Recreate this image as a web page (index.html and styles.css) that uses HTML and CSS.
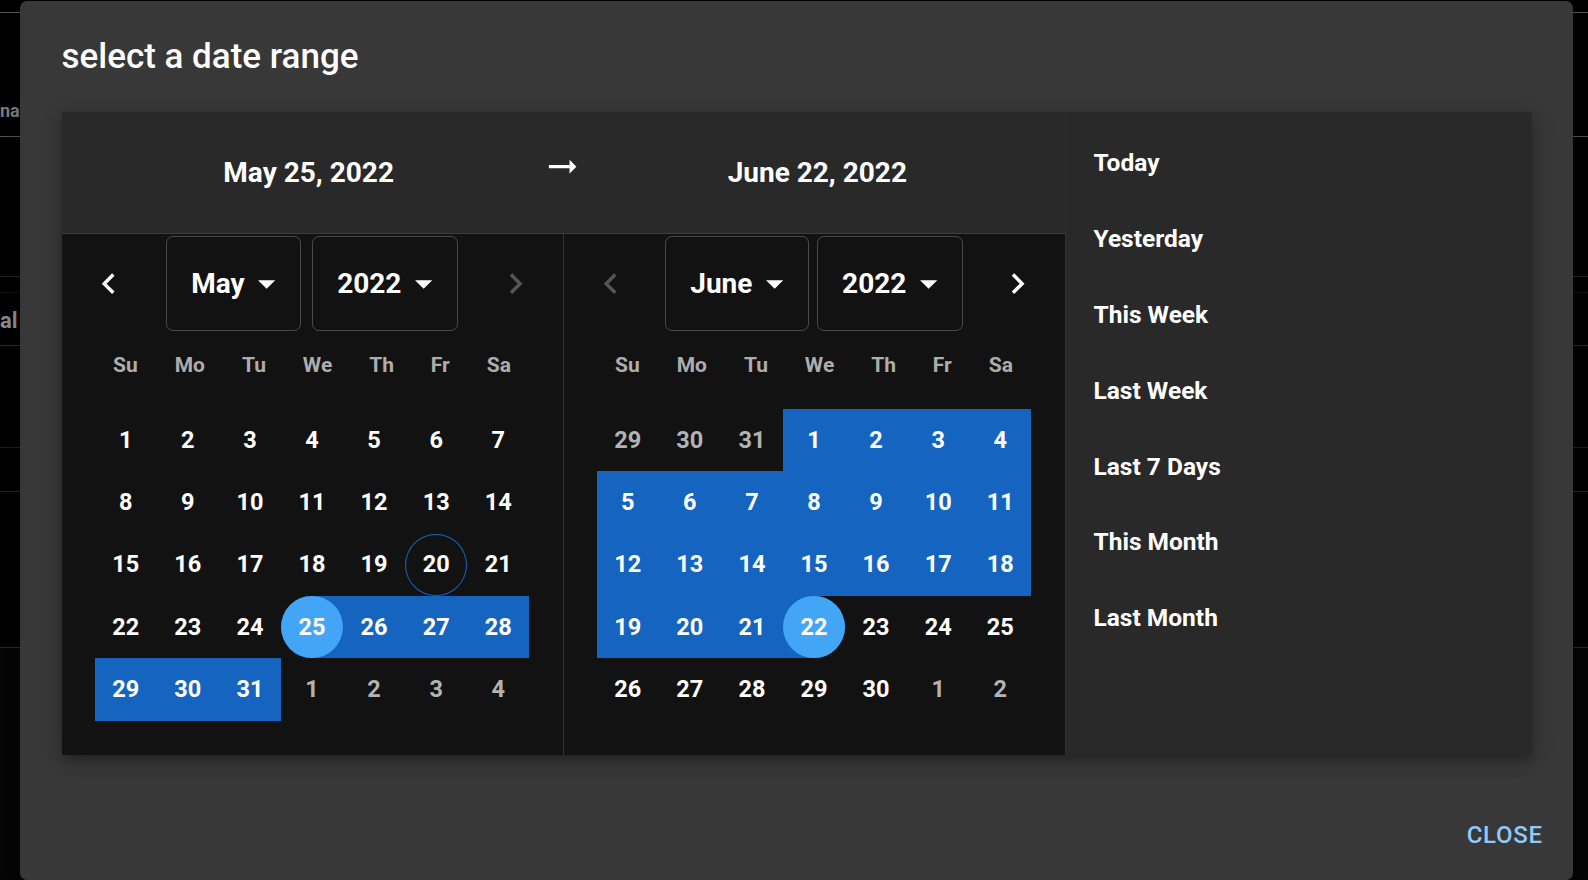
FILE: index.html
```html
<!DOCTYPE html>
<html>
<head>
<meta charset="utf-8">
<title>select a date range</title>
<link rel="stylesheet" href="styles.css">
</head>
<body>
<div class="page">
  <div class="prow r1"></div>
  <div class="prow r2"><span class="ptext t1">na</span></div>
  <div class="prow r3"></div>
  <div class="prow r4"></div>
  <div class="prow r5"><span class="ptext t2">al</span></div>
  <div class="prow r6"></div>
  <div class="prow r7"></div>
  <div class="prow r8"></div>
  <div class="prow r9"></div>
</div>

<div class="dialog">
  <div class="dtitle">select a date range</div>
  <div class="dcontent">
    <div class="picker">
      <div class="pmain">
        <div class="phead">
          <div class="hitem"><span class="hdate">May 25, 2022</span></div>
          <div class="hitem harrow-wrap"><svg class="harrow" viewBox="0 0 24 24"><path d="M16.01 11H4v2h12.01v3L20 12l-3.99-4z"/></svg></div>
          <div class="hitem"><span class="hdate">June 22, 2022</span></div>
        </div>
        <div class="hdivider"></div>
        <div class="months">
          <div class="month">
            <div class="mhead">
              <div class="nav"><svg class="chev" viewBox="0 0 24 24"><path d="M15.41 7.41 14 6l-6 6 6 6 1.41-1.41L10.83 12z"/></svg></div>
              <div class="sel"><span class="seltext">May</span><svg class="drop" viewBox="0 0 24 24"><path d="M7 10l5 5 5-5z"/></svg></div>
              <div class="sel"><span class="seltext">2022</span><svg class="drop" viewBox="0 0 24 24"><path d="M7 10l5 5 5-5z"/></svg></div>
              <div class="nav dis"><svg class="chev" viewBox="0 0 24 24"><path d="M10 6 8.59 7.41 13.17 12l-4.58 4.59L10 18l6-6z"/></svg></div>
            </div>
            <div class="wdays"><span>Su</span><span>Mo</span><span>Tu</span><span>We</span><span>Th</span><span>Fr</span><span>Sa</span></div>
            <div class="days">
              <div class="week">
                <div class="day"><div class="db">1</div></div>
                <div class="day"><div class="db">2</div></div>
                <div class="day"><div class="db">3</div></div>
                <div class="day"><div class="db">4</div></div>
                <div class="day"><div class="db">5</div></div>
                <div class="day"><div class="db">6</div></div>
                <div class="day"><div class="db">7</div></div>
              </div>
              <div class="week">
                <div class="day"><div class="db">8</div></div>
                <div class="day"><div class="db">9</div></div>
                <div class="day"><div class="db">10</div></div>
                <div class="day"><div class="db">11</div></div>
                <div class="day"><div class="db">12</div></div>
                <div class="day"><div class="db">13</div></div>
                <div class="day"><div class="db">14</div></div>
              </div>
              <div class="week">
                <div class="day"><div class="db">15</div></div>
                <div class="day"><div class="db">16</div></div>
                <div class="day"><div class="db">17</div></div>
                <div class="day"><div class="db">18</div></div>
                <div class="day"><div class="db">19</div></div>
                <div class="day"><div class="db today">20</div></div>
                <div class="day"><div class="db">21</div></div>
              </div>
              <div class="week">
                <div class="day"><div class="db">22</div></div>
                <div class="day"><div class="db">23</div></div>
                <div class="day"><div class="db">24</div></div>
                <div class="day start"><div class="db fill">25</div></div>
                <div class="day in"><div class="db">26</div></div>
                <div class="day in"><div class="db">27</div></div>
                <div class="day in"><div class="db">28</div></div>
              </div>
              <div class="week">
                <div class="day in"><div class="db">29</div></div>
                <div class="day in"><div class="db">30</div></div>
                <div class="day in"><div class="db">31</div></div>
                <div class="day out"><div class="db">1</div></div>
                <div class="day out"><div class="db">2</div></div>
                <div class="day out"><div class="db">3</div></div>
                <div class="day out"><div class="db">4</div></div>
              </div>
            </div>
          </div>
          <div class="vdiv"></div>
          <div class="month">
            <div class="mhead">
              <div class="nav dis"><svg class="chev" viewBox="0 0 24 24"><path d="M15.41 7.41 14 6l-6 6 6 6 1.41-1.41L10.83 12z"/></svg></div>
              <div class="sel"><span class="seltext">June</span><svg class="drop" viewBox="0 0 24 24"><path d="M7 10l5 5 5-5z"/></svg></div>
              <div class="sel"><span class="seltext">2022</span><svg class="drop" viewBox="0 0 24 24"><path d="M7 10l5 5 5-5z"/></svg></div>
              <div class="nav"><svg class="chev" viewBox="0 0 24 24"><path d="M10 6 8.59 7.41 13.17 12l-4.58 4.59L10 18l6-6z"/></svg></div>
            </div>
            <div class="wdays"><span>Su</span><span>Mo</span><span>Tu</span><span>We</span><span>Th</span><span>Fr</span><span>Sa</span></div>
            <div class="days">
              <div class="week">
                <div class="day out"><div class="db">29</div></div>
                <div class="day out"><div class="db">30</div></div>
                <div class="day out"><div class="db">31</div></div>
                <div class="day in"><div class="db">1</div></div>
                <div class="day in"><div class="db">2</div></div>
                <div class="day in"><div class="db">3</div></div>
                <div class="day in"><div class="db">4</div></div>
              </div>
              <div class="week">
                <div class="day in"><div class="db">5</div></div>
                <div class="day in"><div class="db">6</div></div>
                <div class="day in"><div class="db">7</div></div>
                <div class="day in"><div class="db">8</div></div>
                <div class="day in"><div class="db">9</div></div>
                <div class="day in"><div class="db">10</div></div>
                <div class="day in"><div class="db">11</div></div>
              </div>
              <div class="week">
                <div class="day in"><div class="db">12</div></div>
                <div class="day in"><div class="db">13</div></div>
                <div class="day in"><div class="db">14</div></div>
                <div class="day in"><div class="db">15</div></div>
                <div class="day in"><div class="db">16</div></div>
                <div class="day in"><div class="db">17</div></div>
                <div class="day in"><div class="db">18</div></div>
              </div>
              <div class="week">
                <div class="day in"><div class="db">19</div></div>
                <div class="day in"><div class="db">20</div></div>
                <div class="day in"><div class="db">21</div></div>
                <div class="day end"><div class="db fill">22</div></div>
                <div class="day"><div class="db">23</div></div>
                <div class="day"><div class="db">24</div></div>
                <div class="day"><div class="db">25</div></div>
              </div>
              <div class="week">
                <div class="day"><div class="db">26</div></div>
                <div class="day"><div class="db">27</div></div>
                <div class="day"><div class="db">28</div></div>
                <div class="day"><div class="db">29</div></div>
                <div class="day"><div class="db">30</div></div>
                <div class="day out"><div class="db">1</div></div>
                <div class="day out"><div class="db">2</div></div>
              </div>
            </div>
          </div>
        </div>
      </div>
      <div class="vdiv vdiv-side"></div>
      <ul class="presets">
        <li class="preset"><span class="ptxt">Today</span></li>
        <li class="preset"><span class="ptxt">Yesterday</span></li>
        <li class="preset"><span class="ptxt">This Week</span></li>
        <li class="preset"><span class="ptxt">Last Week</span></li>
        <li class="preset"><span class="ptxt">Last 7 Days</span></li>
        <li class="preset"><span class="ptxt">This Month</span></li>
        <li class="preset"><span class="ptxt">Last Month</span></li>
      </ul>
    </div>
  </div>
  <div class="dactions"><span class="btn-close">Close</span></div>
</div>
</body>
</html>
```

FILE: styles.css
```css
* { box-sizing: border-box; }
html, body { margin: 0; padding: 0; }
body {
  width: 1588px;
  height: 880px;
  overflow: hidden;
  background: #000;
  color: #fff;
  font-family: Roboto, "Noto Sans", "Liberation Sans", sans-serif;
  position: relative;
}

.page { display: flex; flex-direction: column; }
.prow { border-bottom: 1px solid #222; flex: none; }
.r1 { height: 13px; border-bottom-color: #555; }
.r2 { height: 124px; border-bottom-color: #5a5a5a; padding-top: 86px; }
.r3 { height: 140px; border-bottom-color: #262626; }
.r4 { height: 16px; border-bottom-color: #151515; }
.r5 { height: 53px; border-bottom-color: #333; padding-top: 14px; }
.r6 { height: 102px; border-bottom-color: #222; }
.r7 { height: 44px; border-bottom-color: #262626; }
.r8 { height: 156px; border-bottom-color: #2c2c2c; }
.r9 { height: 232px; border-bottom: 0; background: #070707; }
.ptext {
  display: block;
  font-weight: 700;
  white-space: nowrap;
  color: #8a8a8a;
}
.t1 { font-size: 18px; line-height: 24px; }
.t2 { font-size: 22px; line-height: 28px; color: #9a9a9a; }

/* dialog */
.dialog {
  position: absolute;
  left: 20px;
  top: 1px;
  width: 1553px;
  background: #383838;
  border-radius: 7px;
  box-shadow: 0 19px 26px -12px rgba(0,0,0,.2), 0 41px 65px 5px rgba(0,0,0,.14), 0 16px 79px 14px rgba(0,0,0,.12);
  display: flex;
  flex-direction: column;
}
.dtitle {
  padding: 28px 41.5px;
  font-size: 35px;
  line-height: 55px;
  font-weight: 500;
  color: #fff;
}
.dcontent { padding: 0 41.5px 34.4px; }

.picker {
  display: flex;
  background: #292929;
  box-shadow: 0 5px 9px -2px rgba(0,0,0,.2), 0 9px 14px 0 rgba(0,0,0,.14), 0 2px 24px 0 rgba(0,0,0,.12);
}
.pmain { display: flex; flex-direction: column; flex: none; }

.phead {
  height: 121.4px;
  padding: 0 120px;
  display: flex;
  align-items: center;
}
.hitem { flex: 1 1 0; text-align: center; }
.hdate { font-size: 28px; line-height: 48px; font-weight: 700; }
.harrow-wrap { display: flex; justify-content: center; }
.harrow { width: 41.3px; height: 41.3px; fill: #fff; margin-bottom: 11.3px; display: block; }
.hdivider { height: 1px; background: #3e3e3e; }

.months { display: flex; }
.vdiv { width: 1px; background: #333; flex: none; }
.vdiv-side { background: #303030; }

.month { width: 501px; background: #121212; flex: none; }
.mhead {
  padding-top: 1.3px;
  display: flex;
  justify-content: space-between;
  align-items: center;
}
.nav {
  width: 93.4px;
  height: 92.9px;
  display: flex;
  align-items: center;
  justify-content: center;
  color: #fff;
}
.nav.dis { color: #555; }
.chev { width: 41.3px; height: 41.3px; fill: currentColor; display: block; }

.sel {
  height: 95.6px;
  display: flex;
  align-items: center;
  padding: 0 12.3px 0 24px;
  border: 1px solid rgba(255,255,255,0.23);
  border-radius: 7px;
}
.seltext { font-size: 28px; font-weight: 700; line-height: 39.5px; }
.drop { width: 41.3px; height: 41.3px; fill: #fff; margin-left: 1.8px; display: block; }

.wdays {
  margin-top: 17.2px;
  padding: 0 51.6px;
  display: flex;
  justify-content: space-between;
  font-size: 21px;
  line-height: 35px;
  font-weight: 700;
  color: #adadad;
}

.days { margin: 25.3px 0 34.6px; }
.week { display: flex; justify-content: center; }
.day { width: 62.1px; height: 62.4px; flex: none; }
.day.in { background: #1565c0; }
.day.start { background: #1565c0; border-radius: 50% 0 0 50%; }
.day.end { background: #1565c0; border-radius: 0 50% 50% 0; }
.db {
  width: 62.1px;
  height: 62.4px;
  border-radius: 50%;
  display: flex;
  align-items: center;
  justify-content: center;
  font-size: 23.5px;
  line-height: 36.8px;
  font-weight: 700;
  color: #fff;
}
.db.today { border: 1.5px solid #1565c0; }
.db.fill { background: #42a5f5; }
.day.out .db { color: #b3b3b3; }

.presets {
  flex: 1;
  list-style: none;
  margin: 0;
  padding: 13.8px 0 0;
}
.preset { padding: 13.8px 28px; }
.ptxt {
  display: block;
  margin: 6.9px 0;
  font-size: 24.5px;
  line-height: 34.4px;
  font-weight: 700;
}

.dactions {
  display: flex;
  justify-content: flex-end;
  padding: 13.8px 16.5px 13.8px 13.8px;
}
.btn-close {
  padding: 10.8px 13.8px 9.8px;
  font-size: 24px;
  line-height: 42px;
  font-weight: 500;
  letter-spacing: 0.69px;
  text-transform: uppercase;
  color: #90caf9;
}
```
